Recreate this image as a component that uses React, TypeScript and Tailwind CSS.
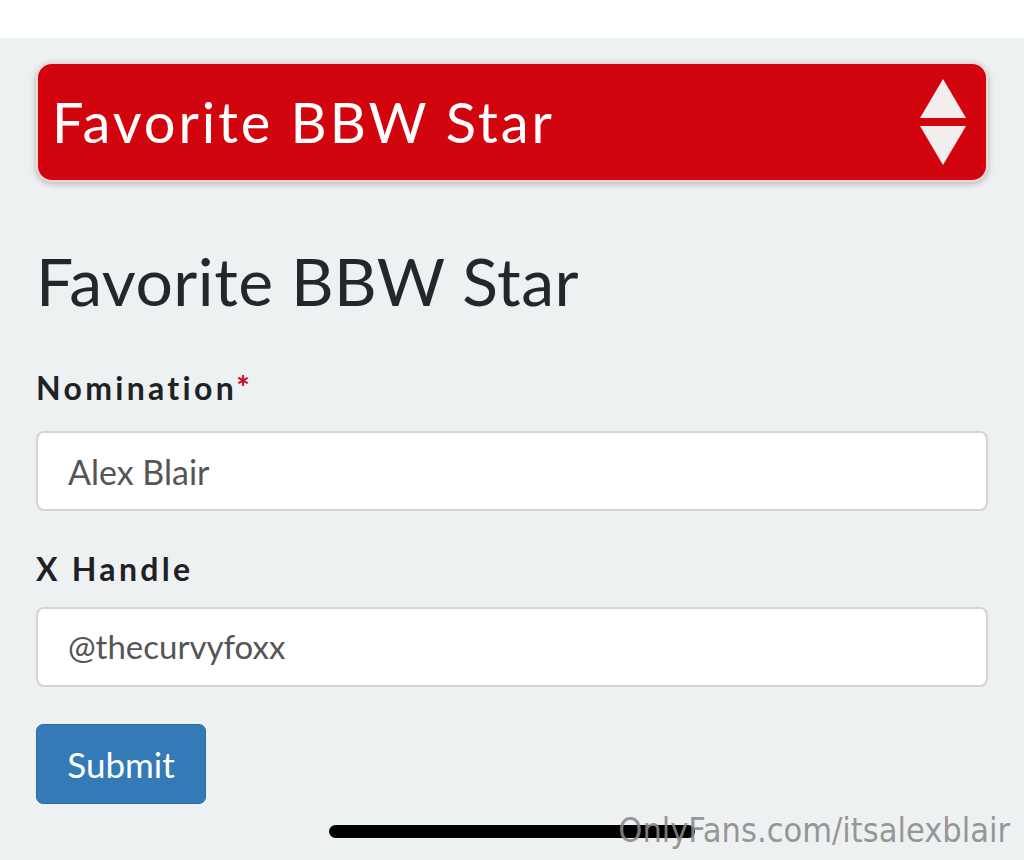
export default function App() {
  return (
    <div className="h-[860px] w-[1024px] overflow-hidden bg-[#eef1f2] font-['Lato',sans-serif]">
      <div className="h-[38px] bg-white" />
      <div className="px-[36px] pt-[24px]">
        <div className="flex h-[120px] items-center justify-between rounded-[16px] border-2 border-[#f6d6d6] bg-[#d2040e] pl-[14px] pr-[18px] shadow-[0_2px_6px_rgba(0,0,0,0.25)]">
          <span className="text-[56px] leading-none tracking-[2.9px] text-white">Favorite BBW Star</span>
          <svg width="50" height="90" viewBox="0 0 50 90">
            <polygon points="25,2 48,41 2,41" fill="#f2eeee" />
            <polygon points="2,49 48,49 25,88" fill="#f2eeee" />
          </svg>
        </div>
        <h1 className="mt-[66px] h-[66px] text-[66px] leading-none tracking-[0.5px] text-[#23272b]">Favorite BBW Star</h1>
        <div className="mt-[58px] text-[32px] font-bold leading-none tracking-[3.3px] text-[#1e2125]">
          Nomination<span className="text-[#d0021b]">*</span>
        </div>
        <div className="mt-[27px] flex h-[80px] items-center rounded-[8px] border-2 border-[#d2d4d6] bg-white px-[30px] text-[34px] text-[#555]">
          Alex Blair
        </div>
        <div className="mt-[42px] text-[32px] font-bold leading-none tracking-[3.3px] text-[#1e2125]">X Handle</div>
        <div className="mt-[22px] flex h-[80px] items-center rounded-[8px] border-2 border-[#d2d4d6] bg-white px-[30px] text-[33px] text-[#555]">
          @thecurvyfoxx
        </div>
        <button className="mt-[37px] flex h-[80px] w-[170px] items-center justify-center rounded-[7px] border border-[#2e6da4] bg-[#337ab7] text-[35px] text-white">
          Submit
        </button>
      </div>
      <div className="relative mt-[17px] h-[40px]">
        <div className="absolute left-[329px] top-[4px] h-[13px] w-[366px] rounded-full bg-black" />
        <div className="absolute right-[14px] top-[-8px] font-['DejaVu_Sans_Condensed','DejaVu_Sans',sans-serif] text-[34px] leading-none text-[#8a8a8a]/90">
          OnlyFans.com/itsalexblair
        </div>
      </div>
    </div>
  );
}
